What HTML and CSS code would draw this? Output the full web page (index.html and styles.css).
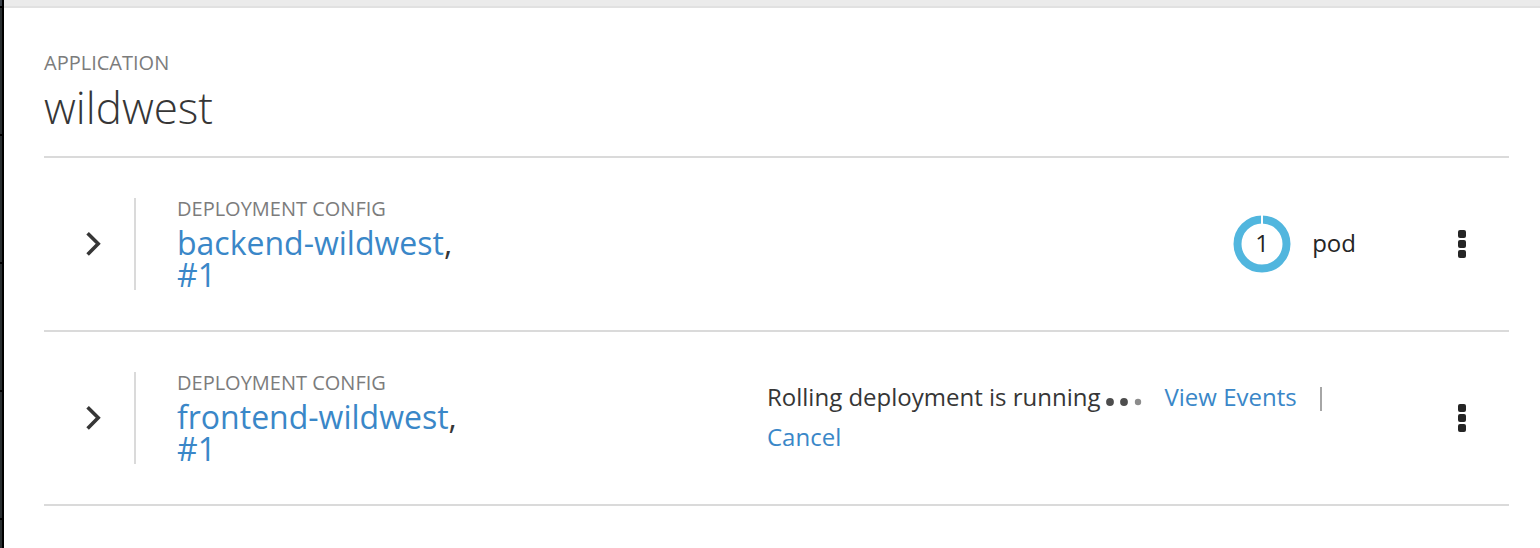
FILE: index.html
```html
<!DOCTYPE html>
<html lang="en">
<head>
<meta charset="utf-8">
<title>wildwest</title>
<link rel="stylesheet" href="styles.css">
</head>
<body>
<div class="shell">
  <nav class="rail"><span class="rail-item rail-first"></span><span class="rail-item"></span><span class="rail-item"></span><span class="rail-item"></span><span class="rail-item"></span></nav>
  <div class="page">
    <div class="topbar"></div>
    <main class="content">
      <header class="app-header">
        <div class="label">APPLICATION</div>
        <h1 class="app-name">wildwest</h1>
      </header>
      <section class="row">
        <button class="toggle" aria-label="Expand"><svg width="18" height="28" viewBox="0 0 18 28"><path d="M3.6 3.2 14.2 13.8 3.6 24.4"/></svg></button>
        <div class="config">
          <div class="label">DEPLOYMENT CONFIG</div>
          <h2 class="config-name"><a>backend-wildwest</a>,<br><a>#1</a></h2>
        </div>
        <div class="pods">
          <div class="donut">
            <svg width="58" height="58" viewBox="0 0 58 58"><circle cx="29" cy="29" r="24.5"/><path d="M29 0V9"/></svg>
            <span class="count">1</span>
          </div>
          <span class="unit">pod</span>
        </div>
        <button class="kebab" aria-label="Actions"><i></i><i></i><i></i></button>
      </section>
      <section class="row">
        <button class="toggle" aria-label="Expand"><svg width="18" height="28" viewBox="0 0 18 28"><path d="M3.6 3.2 14.2 13.8 3.6 24.4"/></svg></button>
        <div class="config">
          <div class="label">DEPLOYMENT CONFIG</div>
          <h2 class="config-name"><a>frontend-wildwest</a>,<br><a>#1</a></h2>
        </div>
        <div class="status">
          <div class="status-line"><span>Rolling deployment is running</span><svg class="dots" width="38" height="10" viewBox="0 0 38 10"><circle cx="5" cy="5" r="3.9" fill="#4d4d4d"/><circle cx="19" cy="5" r="3.9" fill="#4d4d4d"/><circle cx="33" cy="5" r="3.2" fill="#8c8c8c"/></svg><a class="events">View Events</a><span class="divider"></span></div>
          <div class="status-line"><a>Cancel</a></div>
        </div>
        <button class="kebab" aria-label="Actions"><i></i><i></i><i></i></button>
      </section>
    </main>
  </div>
</div>
</body>
</html>
```

FILE: styles.css
```css
* { box-sizing: border-box; }
body { margin: 0; background: #fff; color: #363636; font-family: "Open Sans", sans-serif; font-size: 24px; overflow: hidden; }
button { border: 0; background: none; padding: 0; }
a { color: #3a87c8; }
.shell { display: flex; height: 548px; }
.rail { width: 4px; border-right: 2px solid #000; background: #292e30; overflow: hidden; flex: none; }
.rail-item { display: block; height: 128px; border-bottom: 2px solid #000; }
.rail-first { height: 8px; background: #394048; }
.page { flex: 1; }
.topbar { height: 8px; background: #ebebeb; border-bottom: 2px solid #e1e1e1; }
.content { padding: 44px 31px 0 40px; }
.app-header { height: 106px; border-bottom: 2px solid #dadada; }
.label { padding-top: 1px; font-size: 20px; line-height: 20px; color: #7c7c7c; }
.app-name { margin: 10px 0 0; font-size: 44px; line-height: 48px; font-weight: 300; }
.row { display: flex; height: 174px; padding-top: 40px; border-bottom: 2px solid #dadada; }
.toggle { width: 92px; height: 92px; padding-left: 40px; border-right: 2px solid #dadada; display: flex; align-items: center; flex: none; }
.toggle path { fill: none; stroke: #363636; stroke-width: 3.6; stroke-linecap: butt; }
.config { margin-left: 41px; width: 590px; flex: none; }
.config-name { margin: 8px 0 0; font-size: 32px; line-height: 32px; font-weight: 400; }
.pods { margin-left: auto; display: flex; align-items: center; height: 92px; gap: 21px; color: #252525; }
.donut { display: grid; place-items: center; }
.donut svg, .count { grid-area: 1 / 1; }
.count, .unit { padding-bottom: 3px; }
.donut circle { fill: none; stroke: #51b6de; stroke-width: 8; }
.donut path { stroke: #fff; stroke-width: 2; }
.status { flex: 1; padding-top: 5px; }
.status-line { display: flex; align-items: center; height: 40px; line-height: 40px; white-space: nowrap; }
.dots { margin: 9px 0 0 5px; }
.events { margin-left: 21px; }
.divider { width: 2px; height: 24px; margin: 4px 0 0 23px; background: #a6a6a6; }
.kebab { width: 8px; height: 92px; margin: 0 43px 0 102px; display: flex; flex-direction: column; justify-content: center; gap: 2px; flex: none; }
.status + .kebab { margin-left: 0; }
.kebab i { width: 8px; height: 8px; border-radius: 2px; background: #252525; }
```
